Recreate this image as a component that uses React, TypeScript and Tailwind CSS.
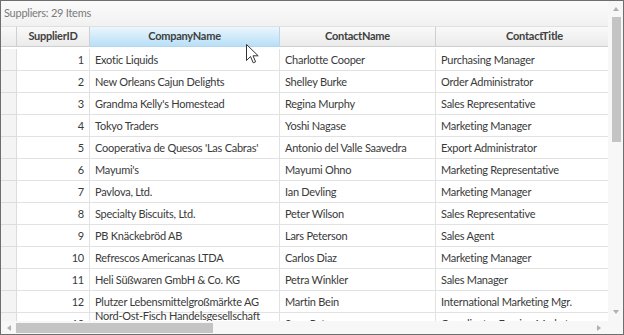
import React from "react";

type Supplier = {
  id: number;
  company: string[];
  contact: string;
  title: string;
};

// company names are given as the lines the grid shows them on
const suppliers: Supplier[] = [
  { id: 1, company: ["Exotic Liquids"], contact: "Charlotte Cooper", title: "Purchasing Manager" },
  { id: 2, company: ["New Orleans Cajun Delights"], contact: "Shelley Burke", title: "Order Administrator" },
  { id: 3, company: ["Grandma Kelly's Homestead"], contact: "Regina Murphy", title: "Sales Representative" },
  { id: 4, company: ["Tokyo Traders"], contact: "Yoshi Nagase", title: "Marketing Manager" },
  { id: 5, company: ["Cooperativa de Quesos 'Las Cabras'"], contact: "Antonio del Valle Saavedra", title: "Export Administrator" },
  { id: 6, company: ["Mayumi's"], contact: "Mayumi Ohno", title: "Marketing Representative" },
  { id: 7, company: ["Pavlova, Ltd."], contact: "Ian Devling", title: "Marketing Manager" },
  { id: 8, company: ["Specialty Biscuits, Ltd."], contact: "Peter Wilson", title: "Sales Representative" },
  { id: 9, company: ["PB Knäckebröd AB"], contact: "Lars Peterson", title: "Sales Agent" },
  { id: 10, company: ["Refrescos Americanas LTDA"], contact: "Carlos Diaz", title: "Marketing Manager" },
  { id: 11, company: ["Heli Süßwaren GmbH & Co. KG"], contact: "Petra Winkler", title: "Sales Manager" },
  { id: 12, company: ["Plutzer Lebensmittelgroßmärkte AG"], contact: "Martin Bein", title: "International Marketing Mgr." },
  { id: 13, company: ["Nord-Ost-Fisch Handelsgesellschaft", "mbH"], contact: "Sven Petersen", title: "Coordinator Foreign Markets" },
];

const cell =
  "flex items-center border-r border-b border-[#e2e2e2] px-[5px] leading-[16px] whitespace-nowrap";
const head =
  "flex h-[20px] items-center justify-center border-r border-b border-[#cfcfcf] bg-gradient-to-b from-[#f9f9f9] to-[#ebebeb] font-bold text-[#404040]";

function Cursor() {
  return (
    <svg
      className="absolute left-[245px] top-[43px]"
      width="13"
      height="20"
      viewBox="0 0 13 20"
    >
      <path
        d="M0.5 0.5 L0.5 16.5 L4.5 12.5 L7.2 18.8 L9.6 17.8 L7 11.8 L12.2 11.8 Z"
        fill="#ffffff"
        stroke="#333333"
        strokeWidth="1"
        strokeLinejoin="round"
      />
    </svg>
  );
}

export default function App() {
  return (
    <div
      className="relative w-[624px] h-[335px] overflow-hidden border border-[#6e6e6e] bg-white text-[11px] tracking-[-0.25px] text-[#3a3a3a]"
      style={{ fontFamily: '"Lato", sans-serif' }}
    >
      <div className="grid h-full grid-cols-[607px_15px] grid-rows-[320px_13px]">
        {/* grid area */}
        <div className="flex flex-col overflow-hidden">
          <div className="flex h-[26px] shrink-0 items-center border-b border-[#e0e0e0] bg-gradient-to-b from-[#fbfbfb] to-[#f1f1f1] pl-[3px] text-[#7a7a7a]">
            Suppliers: 29 Items
          </div>
          <div className="grid w-[633px] grid-cols-[16px_73px_190px_156px_198px] auto-rows-[22px]">
            <div className={head} />
            <div className={head}>SupplierID</div>
            <div className="flex h-[20px] items-center justify-center border-r border-b border-[#b5d6ec] bg-gradient-to-b from-[#eaf6fd] to-[#b8dff7] font-bold text-[#404040]">
              CompanyName
            </div>
            <div className={head}>ContactName</div>
            <div className={head}>ContactTitle</div>

            {suppliers.map((s) => (
              <React.Fragment key={s.id}>
                <div className="border-r border-b border-[#dcdcdc] bg-[#f4f4f4]" />
                <div className={`${cell} justify-end`}>{s.id}</div>
                <div className={`${cell} flex-col !items-start justify-center`}>
                  {s.company.map((line) => (
                    <span key={line}>{line}</span>
                  ))}
                </div>
                <div className={cell}>{s.contact}</div>
                <div className={cell}>{s.title}</div>
              </React.Fragment>
            ))}
          </div>
        </div>

        {/* vertical scrollbar */}
        <div className="flex flex-col items-center bg-[#f7f7f7]">
          <div className="flex h-[16px] w-full items-center justify-center">
            <div className="h-0 w-0 border-x-[3.5px] border-b-[4px] border-x-transparent border-b-[#b0b0b0]" />
          </div>
          <div className="ml-[1px] h-[125px] w-[9px] bg-[#c4c4c4]" />
          <div className="flex-1" />
          <div className="flex h-[16px] w-full items-center justify-center pb-[3px]">
            <div className="h-0 w-0 border-x-[3.5px] border-t-[4px] border-x-transparent border-t-[#b0b0b0]" />
          </div>
        </div>

        {/* horizontal scrollbar */}
        <div className="flex items-center bg-[#f7f7f7]">
          <div className="flex w-[15px] justify-center">
            <div className="h-0 w-0 border-y-[3.5px] border-r-[4px] border-y-transparent border-r-[#b0b0b0]" />
          </div>
          <div className="h-[10px] w-[197px] bg-[#c4c4c4]" />
          <div className="flex-1" />
          <div className="flex w-[15px] justify-center pr-[4px]">
            <div className="h-0 w-0 border-y-[3.5px] border-l-[4px] border-y-transparent border-l-[#b0b0b0]" />
          </div>
        </div>
        <div className="bg-[#f7f7f7]" />
      </div>
      <Cursor />
    </div>
  );
}
